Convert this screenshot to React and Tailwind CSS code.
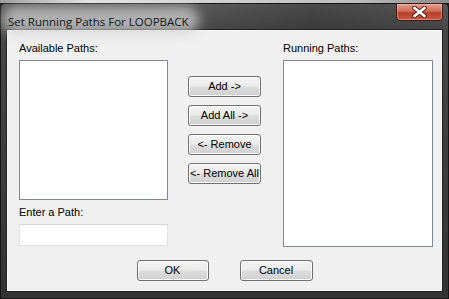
import React from "react";

const btn =
  "h-[21px] rounded-[3px] border border-[#707070] bg-[linear-gradient(to_bottom,#f3f3f3_0%,#ebebeb_48%,#dddddd_52%,#cfcfcf_100%)] shadow-[inset_0_0_0_1px_#fbfbfb] text-[11px] leading-[19px] text-black text-center";

function Btn({ children, className = "" }) {
  return <div className={`${btn} ${className}`}>{children}</div>;
}

export default function App() {
  return (
    <div className="w-[449px] h-[299px] overflow-hidden bg-[#1c1c1c] flex flex-col">
      <div className="h-[3px] bg-[linear-gradient(to_right,#9a9a9a,#e6e6e6_20%,#d0d0d0_50%,#bdbdbd_80%,#8a8a8a)]" />
      <div className="flex-1 flex flex-col rounded-t-[5px] border border-[#161616] bg-[linear-gradient(to_bottom,#595959_0px,#474747_26px,#333333_100%)] px-[5px] pb-[6px]">
        <div className="h-[25px] flex items-start justify-between bg-[linear-gradient(to_right,transparent_0%,transparent_45%,rgba(0,0,0,0.18)_70%,rgba(0,0,0,0.05)_100%)]">
          <div className="relative ml-[2px] mt-[4px]">
            <span className="absolute -left-[6px] -right-[10px] -top-[2px] -bottom-[2px] rounded-full bg-[#cfcfcf] blur-[6px] opacity-75" />
            <span className="relative text-[11.5px] leading-[16px] text-[#101820] font-['Open_Sans',sans-serif] whitespace-nowrap">
              Set Running Paths For LOOPBACK
            </span>
          </div>
          <div className="-mt-[1px] w-[47px] h-[18px] rounded-b-[4px] border border-[#3a1a14] bg-[linear-gradient(to_bottom,#e0a092_0%,#d06a56_45%,#b8402a_55%,#c9583c_100%)] shadow-[inset_0_0_0_1px_rgba(255,200,190,0.45)] flex items-center justify-center">
            <svg width="15" height="12" viewBox="0 0 15 12">
              <path d="M2.5 2 L12.5 10 M12.5 2 L2.5 10" stroke="#4a2018" strokeWidth="4.6" strokeLinecap="round" />
              <path d="M2.5 2 L12.5 10 M12.5 2 L2.5 10" stroke="#ffffff" strokeWidth="2.8" strokeLinecap="round" />
            </svg>
          </div>
        </div>
        <div className="flex-1 border border-[#222222]">
          <div className="h-full border border-[#f7f7f7] bg-[#f0f0f0] font-['Liberation_Sans',Arial,sans-serif] text-[11px] text-black">
            <div className="flex items-start pl-[11px] pt-[11px]">
              <div className="w-[149px] flex flex-col">
                <div className="h-[13px] leading-[13px]">Available Paths:</div>
                <div className="mt-[5px] h-[140px] border border-[#828790] bg-white" />
                <div className="mt-[6px] h-[13px] leading-[13px]">Enter a Path:</div>
                <div className="mt-[5px] h-[22px] border border-[#e2e2e2] border-t-[#d6d6d6] bg-white" />
              </div>
              <div className="ml-[20px] mt-[34px] w-[73px] flex flex-col gap-[8px]">
                <Btn>Add -&gt;</Btn>
                <Btn>Add All -&gt;</Btn>
                <Btn>&lt;- Remove</Btn>
                <Btn>&lt;- Remove All</Btn>
              </div>
              <div className="ml-[22px] w-[150px] flex flex-col">
                <div className="h-[13px] leading-[13px]">Running Paths:</div>
                <div className="mt-[5px] h-[187px] border border-[#828790] bg-white" />
              </div>
            </div>
            <div className="mt-[13px] flex justify-center gap-[31px]">
              <Btn className="w-[72px] border-[#3c7fb1] shadow-[inset_0_0_0_1px_#9fdcf5]">OK</Btn>
              <Btn className="w-[73px]">Cancel</Btn>
            </div>
          </div>
        </div>
      </div>
    </div>
  );
}
